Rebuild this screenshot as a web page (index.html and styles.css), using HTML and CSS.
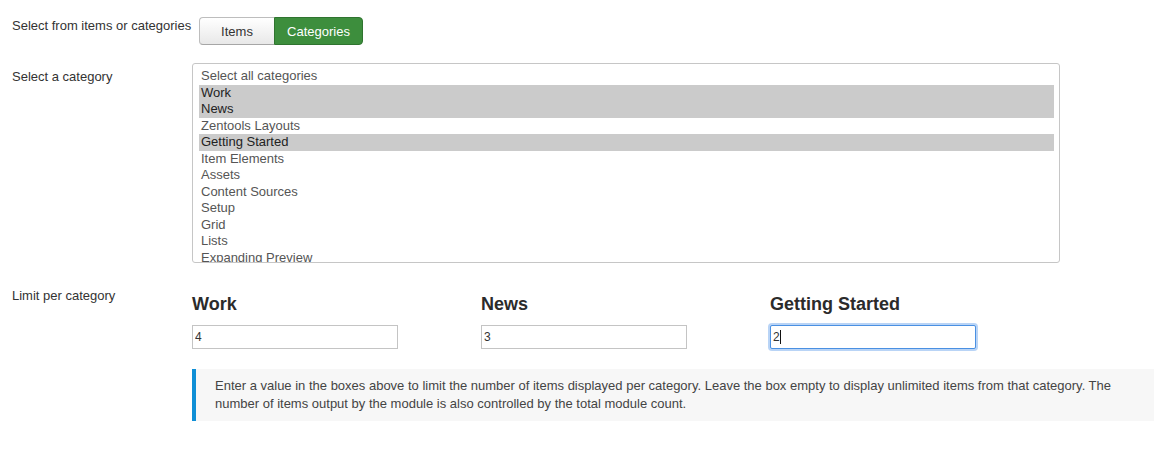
FILE: index.html
```html
<!DOCTYPE html>
<html>
<head>
<meta charset="utf-8">
<link rel="stylesheet" href="styles.css">
</head>
<body>
<div class="form">
  <div class="row row-toggle">
    <div class="label">Select from items or categories</div>
    <div class="btn-group">
      <button class="btn btn-items">Items</button>
      <button class="btn btn-cats">Categories</button>
    </div>
  </div>
  <div class="row row-select">
    <div class="label label-select">Select a category</div>
    <div class="listbox">
      <div class="opt">Select all categories</div>
      <div class="opt sel">Work</div>
      <div class="opt sel">News</div>
      <div class="opt">Zentools Layouts</div>
      <div class="opt sel">Getting Started</div>
      <div class="opt">Item Elements</div>
      <div class="opt">Assets</div>
      <div class="opt">Content Sources</div>
      <div class="opt">Setup</div>
      <div class="opt">Grid</div>
      <div class="opt">Lists</div>
      <div class="opt">Expanding Preview</div>
      <div class="opt">Masonry</div>
    </div>
  </div>
  <div class="row row-limit">
    <div class="label label-limit">Limit per category</div>
    <div class="limit-area">
      <div class="limit-cols">
        <div class="limit-col">
          <h3 class="limit-title">Work</h3>
          <input class="limit-input" type="text" value="4">
        </div>
        <div class="limit-col">
          <h3 class="limit-title">News</h3>
          <input class="limit-input" type="text" value="3">
        </div>
        <div class="limit-col">
          <h3 class="limit-title">Getting Started</h3>
          <div class="input-wrap">
            <input class="limit-input focused" type="text" value="2">
            <span class="caret"></span>
          </div>
        </div>
      </div>
      <div class="note">Enter a value in the boxes above to limit the number of items displayed per category. Leave the box empty to display unlimited items from that category. The number of items output by the module is also controlled by the total module count.</div>
    </div>
  </div>
</div>
</body>
</html>
```

FILE: styles.css
```css
* { box-sizing: border-box; }
html, body {
  margin: 0;
  padding: 0;
  background: #fff;
}
body {
  font-family: "Liberation Sans", Arial, Helvetica, sans-serif;
  font-size: 13px;
  line-height: 18px;
  color: #333;
  width: 1154px;
  height: 457px;
  overflow: hidden;
}
.form {
  padding-top: 17px;
  padding-left: 12px;
}
.row {
  display: flex;
  align-items: flex-start;
}
.label {
  width: 180px;
  flex: 0 0 180px;
  white-space: nowrap;
  color: #333;
}
.btn-group {
  display: flex;
  margin-left: 7px;
}
.btn {
  font-family: "Liberation Sans", Arial, Helvetica, sans-serif;
  font-size: 13px;
  height: 28px;
  padding: 0;
  margin: 0;
  text-align: center;
  cursor: pointer;
}
.btn-items {
  width: 75px;
  color: #333;
  background: linear-gradient(#ffffff, #e8e8e8);
  border: 1px solid #bdbdbd;
  border-bottom-color: #a6a6a6;
  border-right: none;
  border-radius: 4px 0 0 4px;
  box-shadow: inset 0 1px 0 rgba(255,255,255,.3);
}
.btn-cats {
  width: 89px;
  color: #fff;
  background: #3d8e3d;
  border: 1px solid #2f742f;
  border-radius: 0 4px 4px 0;
}
.row-select {
  margin-top: 18px;
}
.label-select {
  padding-top: 5px;
}
.listbox {
  width: 868px;
  height: 200px;
  border: 1px solid #c6c6c6;
  border-radius: 3px;
  padding: 4px 5px 0 6px;
  overflow: hidden;
  background: #fff;
}
.opt {
  height: 16.5px;
  line-height: 16.5px;
  padding-left: 2px;
  color: #555;
  white-space: nowrap;
}
.opt.sel {
  background: #cbcbcb;
  color: #222;
}
.row-limit {
  margin-top: 24px;
}
.limit-area {
  flex: 1;
  display: flex;
  flex-direction: column;
}
.limit-cols {
  display: flex;
}
.limit-col {
  width: 289px;
  display: flex;
  flex-direction: column;
  align-items: flex-start;
}
.limit-title {
  margin: 7px 0 0 0;
  font-size: 18px;
  line-height: 20px;
  font-weight: bold;
  color: #2b2b2b;
}
.limit-input {
  margin-top: 11px;
  width: 206px;
  height: 24px;
  border: 1px solid #c4c4c4;
  padding: 0 2px;
  font-family: "Liberation Sans", Arial, Helvetica, sans-serif;
  font-size: 12px;
  color: #333;
  background: #fff;
  outline: none;
  border-radius: 0;
}
.input-wrap {
  position: relative;
  margin-top: 11px;
}
.input-wrap .limit-input {
  margin-top: 0;
}
.limit-input.focused {
  border: 1px solid #4a90e2;
  box-shadow: 0 0 0 2px rgba(100, 160, 235, 0.45);
  border-radius: 2px;
}
.caret {
  position: absolute;
  left: 10px;
  top: 5px;
  width: 1px;
  height: 14px;
  background: #111;
}
.note {
  margin-top: 20px;
  background: #f7f7f7;
  border-left: 4px solid #0f8fd6;
  padding: 8px 20px 8px 19px;
  line-height: 18px;
  color: #444;
  font-size: 13px;
}
```
